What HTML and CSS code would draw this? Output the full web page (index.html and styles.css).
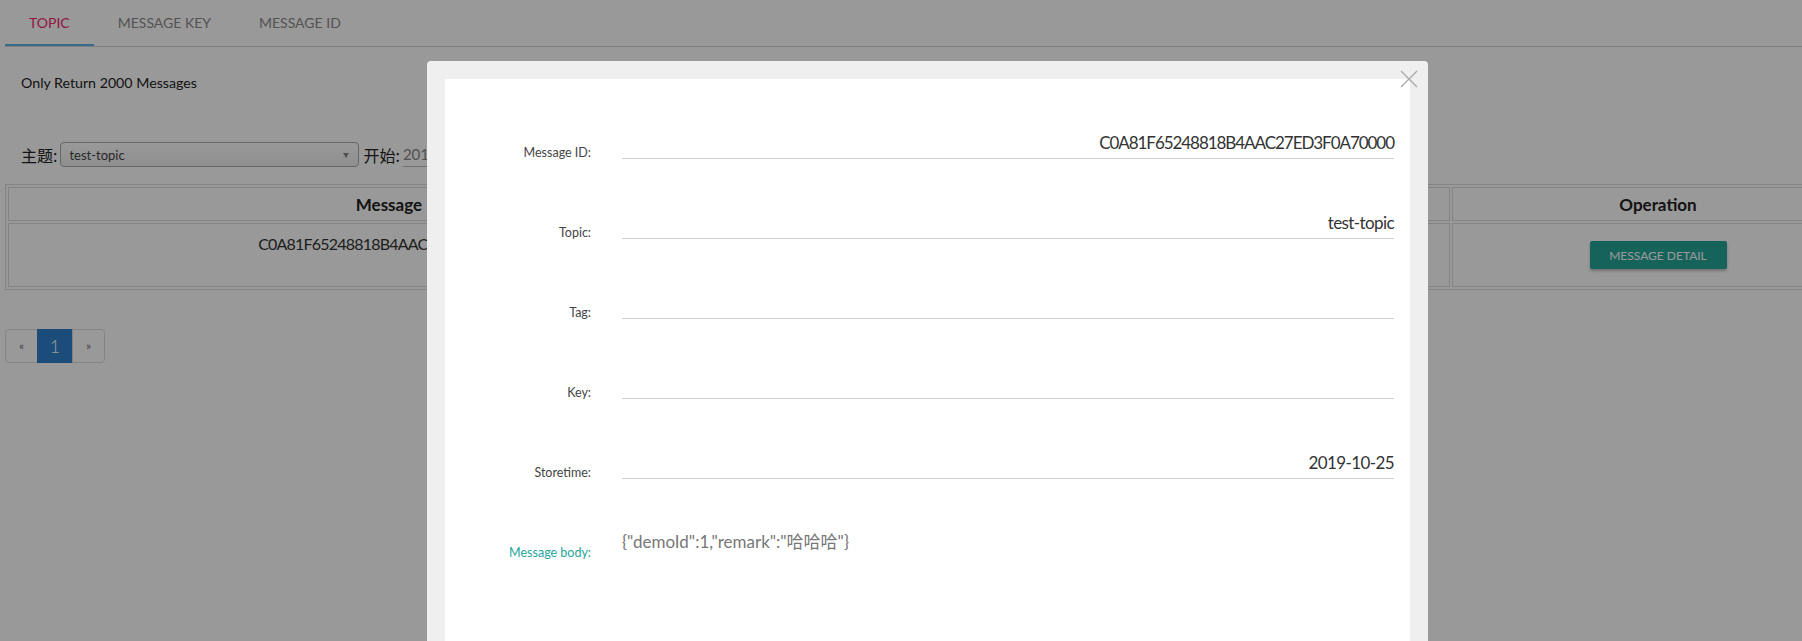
FILE: index.html
```html
<!DOCTYPE html>
<html lang="en">

<head>
    <meta charset="UTF-8">
    <meta name="viewport" content="width=device-width, initial-scale=1.0">
    <title>Message Query</title>
    <link rel="stylesheet" href="styles.css">
</head>

<body>
    <div class="page">
        <!-- 查询方式 tabs -->
        <ul class="tabs">
            <li class="tab active">TOPIC</li>
            <li class="tab">MESSAGE KEY</li>
            <li class="tab">MESSAGE ID</li>
        </ul>

        <p class="notice">Only Return 2000 Messages</p>

        <div class="filters">
            <span class="filter-label">主题:</span>
            <div class="select-box">
                <span>test-topic</span>
                <b class="select-arrow"></b>
            </div>
            <span class="filter-label">开始:</span>
            <span class="date-input">2019-10-25 00:00</span>
        </div>

        <!-- 中间几列被弹窗遮住 -->
        <table class="result-table">
            <colgroup>
                <col class="col-id">
                <col class="col-tag">
                <col class="col-key">
                <col class="col-time">
                <col class="col-op">
            </colgroup>
            <thead>
                <tr>
                    <th>Message ID</th>
                    <th></th>
                    <th></th>
                    <th></th>
                    <th>Operation</th>
                </tr>
            </thead>
            <tbody>
                <tr>
                    <td class="id-cell">C0A81F65248818B4AAC27ED3F0A70000</td>
                    <td></td>
                    <td></td>
                    <td></td>
                    <td><button class="btn-detail">MESSAGE DETAIL</button></td>
                </tr>
            </tbody>
        </table>

        <ul class="pager">
            <li class="pager-item">&laquo;</li>
            <li class="pager-item current">1</li>
            <li class="pager-item">&raquo;</li>
        </ul>
    </div>

    <div class="overlay"></div>

    <!-- 消息详情弹窗 -->
    <div class="modal">
        <span class="modal-close">
            <svg width="18" height="18" viewBox="0 0 18 18">
                <path d="M1,1 L17,17 M17,1 L1,17" stroke="#a8a8a8" stroke-width="1.3" fill="none" />
            </svg>
        </span>
        <div class="modal-panel">
            <div class="field-row">
                <label class="field-label">Message ID:</label>
                <div class="field-value id-value">C0A81F65248818B4AAC27ED3F0A70000</div>
            </div>
            <div class="field-row">
                <label class="field-label">Topic:</label>
                <div class="field-value">test-topic</div>
            </div>
            <div class="field-row">
                <label class="field-label">Tag:</label>
                <div class="field-value"></div>
            </div>
            <div class="field-row">
                <label class="field-label">Key:</label>
                <div class="field-value"></div>
            </div>
            <div class="field-row">
                <label class="field-label">Storetime:</label>
                <div class="field-value">2019-10-25</div>
            </div>
            <div class="field-row">
                <label class="field-label body-label">Message body:</label>
                <div class="body-value">{"demoId":1,"remark":"哈哈哈"}</div>
            </div>
        </div>
    </div>
</body>

</html>
```

FILE: styles.css
```css
html,
body {
    margin: 0;
    overflow: hidden;
    height: 100%;
}

body {
    font-family: Lato, "Noto Sans CJK SC", sans-serif;
    color: #222;
    background-color: #fff;
}

.page {
    padding-left: 5px;
}

/* tabs */
.tabs {
    display: flex;
    margin: 0;
    padding: 0;
    list-style: none;
    height: 47px;
    border-bottom: 1px solid #d6d6d6;
    box-sizing: border-box;
}

.tab {
    padding: 0 24px;
    line-height: 46px;
    font-size: 14px;
    color: #8a8a8a;
    border-bottom: 2px solid transparent;
}

.tab.active {
    color: #f0286f;
    border-bottom-color: #5cb3e6;
}

.notice {
    margin: 26px 0 0 16px;
    font-size: 14.2px;
    line-height: 20px;
}

/* filter row */
.filters {
    display: flex;
    align-items: center;
    margin: 49px 0 0 16px;
    height: 25px;
    font-size: 16px;
}

.filter-label {
    font-family: "Noto Sans CJK SC", sans-serif;
    font-size: 16px;
    margin-right: 3px;
}

.select-box {
    position: relative;
    display: flex;
    align-items: center;
    width: 299px;
    height: 25px;
    box-sizing: border-box;
    padding-left: 8px;
    margin-right: 4px;
    border: 1px solid #aaa;
    border-radius: 4px;
    background: linear-gradient(#fff, #eee);
    font-size: 13px;
    color: #444;
}

.select-arrow {
    position: absolute;
    right: 9px;
    top: 10px;
    border-left: 3px solid transparent;
    border-right: 3px solid transparent;
    border-top: 5px solid #888;
}

.date-input {
    display: inline-block;
    width: 180px;
    font-size: 15px;
    color: #888;
    border-bottom: 1px solid #bbb;
    line-height: 24px;
}

/* result table */
.result-table {
    margin: 17px 0 0 0;
    width: 1862px;
    table-layout: fixed;
    border: 1px solid #ddd;
    border-spacing: 2px;
}

.col-id {
    width: 784px;
}

.col-tag {
    width: 200px;
}

.col-key {
    width: 200px;
}

.col-time {
    width: 252px;
}

.result-table th {
    border: 1px solid #ddd;
    padding: 7px 8px 6px;
    line-height: 19px;
    font-size: 17px;
    font-weight: bold;
    color: #222;
}

.result-table td {
    border: 1px solid #ddd;
    padding: 12px 8px 17px;
    line-height: 20px;
    font-size: 16px;
    text-align: center;
    vertical-align: top;
    color: #333;
}

.result-table .id-cell {
    padding-top: 10px;
    letter-spacing: -0.8px;
}

.btn-detail {
    margin-top: 5px;
    height: 28px;
    width: 137px;
    padding: 0;
    border: none;
    border-radius: 2px;
    background-color: #26a69a;
    color: #fff;
    font-family: Lato, sans-serif;
    font-size: 12px;
    box-shadow: 0 2px 3px rgba(0, 0, 0, 0.25);
}

/* pagination */
.pager {
    display: flex;
    margin: 39px 0 0 1px;
    padding: 0;
    list-style: none;
}

.pager-item {
    width: 31px;
    height: 32px;
    line-height: 32px;
    text-align: center;
    font-size: 12px;
    color: #777;
    border: 1px solid #ddd;
    margin-left: -1px;
}

.pager-item:first-child {
    border-radius: 4px 0 0 4px;
}

.pager-item:last-child {
    border-radius: 0 4px 4px 0;
}

.pager-item.current {
    width: 34px;
    background-color: #2f80cb;
    border-color: #2f80cb;
    color: #fff;
    font-size: 18px;
    font-weight: 300;
}

/* modal */
.overlay {
    position: fixed;
    inset: 0;
    background-color: rgba(0, 0, 0, 0.4);
}

.modal {
    position: fixed;
    left: 427px;
    top: 61px;
    width: 1001px;
    height: 620px;
    box-sizing: border-box;
    padding: 18px 18px 0;
    background-color: #efefef;
    border-radius: 4px;
}

.modal-close {
    position: absolute;
    top: 9px;
    right: 10px;
    line-height: 0;
}

.modal-panel {
    height: 100%;
    background-color: #fff;
    padding-right: 16px;
}

.field-row {
    display: grid;
    grid-template-columns: 146px 1fr;
    column-gap: 31px;
    align-items: end;
    height: 80px;
}

.field-label {
    font-size: 12.5px;
    line-height: 16px;
    text-align: right;
    color: #444;
    margin-bottom: -2px;
}

.body-label {
    color: #26a69a;
}

.field-value {
    height: 36px;
    box-sizing: border-box;
    padding-top: 4px;
    line-height: 31px;
    border-bottom: 1px solid #d2d2d2;
    text-align: right;
    font-size: 17px;
    letter-spacing: -0.6px;
    color: #333;
}

.id-value {
    letter-spacing: -1.05px;
}

.body-value {
    margin-bottom: 8px;
    line-height: 18px;
    font-size: 17px;
    color: #777;
}
```
